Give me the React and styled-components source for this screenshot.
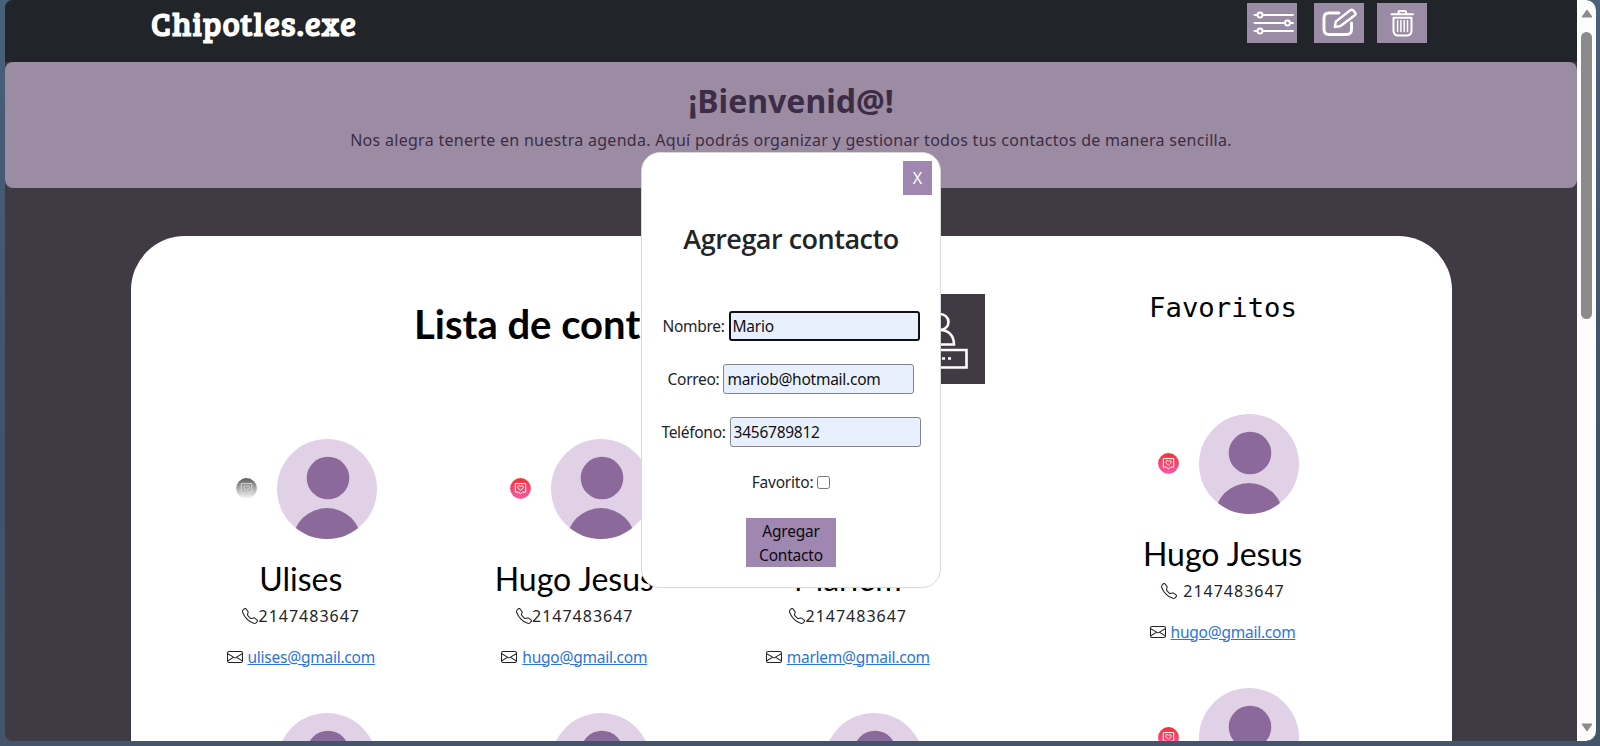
import React from "react";
import styled, { createGlobalStyle } from "styled-components";
import { BsTelephone, BsEnvelope } from "react-icons/bs";

const ui = `"Segoe UI", "Noto Sans", "Open Sans", sans-serif`;
const lucida = `"Lucida Sans", "Noto Sans", sans-serif`;

const Global = createGlobalStyle`
  * { box-sizing: border-box; }
  body { margin: 0; background: #44546a; overflow: hidden; }
  h1, h2, h3, p { margin: 0; font-weight: 400; }
`;

const Desktop = styled.div`
  height: 746px;
  padding: 0 4px 5px 5px;
  background: linear-gradient(180deg, #48607a, #42526a 60%, #44546a);
`;
const Window = styled.div`
  position: relative;
  display: flex;
  height: 741px;
  overflow: hidden;
  border-radius: 8px 10px 10px 8px;
  background: #403a45;
`;
const Page = styled.div`
  width: 1572px;
  height: 741px;
  overflow: hidden;
  font-family: ${ui};
  font-size: 16px;
  line-height: 24px;
  color: #212529;
`;

const Header = styled.header`
  display: flex;
  justify-content: space-between;
  height: 61.5px;
  padding: 0 150.500px 0 146px;
  background: #212529;
`;
const Brand = styled.h1`
  font: 700 33px/46px "Bree Serif", "DejaVu Serif Condensed", "DejaVu Serif", serif;
  font-stretch: condensed;
  letter-spacing: 0.8px;
  color: #fff;
  white-space: nowrap;
`;
const Tools = styled.div`
  display: flex;
  padding-top: 2.5px;
`;
const Tool = styled.button`
  width: 50px;
  height: 40px;
  margin-left: ${(p) => p.$gap}px;
  padding: 0;
  border: 0;
  background: #9b8ca5;
  svg { display: block; }
`;

const Banner = styled.section`
  height: 126.5px;
  padding-top: 16.5px;
  border-radius: 8px;
  background: #9b8ca3;
  color: #3d2c45;
  text-align: center;
  font-family: ${lucida};
`;
const Welcome = styled.h2`
  font-weight: 700;
  font-size: 32px;
  line-height: 46px;
  letter-spacing: 0;
`;
const Intro = styled.p`
  margin-top: 4px;
  font-size: 16px;
  line-height: 24px;
  letter-spacing: 0.29px;
  white-space: nowrap;
`;

const Sheet = styled.main`
  display: flex;
  width: 1321px;
  height: 700px;
  margin: 48px 0 0 126px;
  padding-left: 33px;
  border-radius: 54px 54px 0 0;
  background: #fff;
`;
const Contacts = styled.section`
  width: 821px;
`;
const ContactsHead = styled.div`
  display: flex;
  justify-content: space-between;
  height: 202.5px;
  padding: 58px 0 0 250px;
`;
const ListTitle = styled.h2`
  padding-top: 6px;
  font: 700 40px/48px Lato, sans-serif;
  color: #000;
  white-space: nowrap;
`;
const AddButton = styled.button`
  width: 90px;
  height: 90px;
  padding: 0;
  border: 0;
  background: #403a45;
  svg { display: block; }
`;
const Grid = styled.div`
  display: grid;
  grid-template-columns: repeat(3, 273.5px);
`;
const Favorites = styled.section`
  width: 273px;
  margin-left: 101px;
`;
const FavTitle = styled.h2`
  height: 177.5px;
  padding: 53px 0 0 1px;
  font: 400 27.3px/38px Consolas, "DejaVu Sans Mono", monospace;
  color: #000;
  text-align: center;
`;
const Card = styled.article`
  height: 274.4px;
  text-align: center;
`;
const Portrait = styled.div`
  display: flex;
  align-items: center;
  gap: 20px;
  height: 100px;
  margin-left: 72px;
  svg { display: block; flex: none; }
`;
const Name = styled.h3`
  margin-top: 21px;
  font: 400 32px/38px Lato, sans-serif;
  color: #000;
`;
const Line = styled.p`
  display: flex;
  align-items: center;
  justify-content: center;
  gap: ${(p) => p.$gap}px;
  height: 24px;
  margin-top: ${(p) => p.$top}px;
`;
const Phone = styled.span`
  font-family: ${lucida};
  letter-spacing: 1px;
  margin-right: -1px;
`;
const Mail = styled.a`
  color: #2b74dd;
  text-decoration: underline;
  font-size: 15.5px;
  letter-spacing: -0.24px;
`;

const Scrollbar = styled.div`
  display: flex;
  flex-direction: column;
  align-items: center;
  justify-content: space-between;
  width: 19px;
  padding: 9px 0;
  background: #fcfcfc;
`;
const Thumb = styled.div`
  width: 11px;
  height: 287px;
  margin: 14px 0 auto;
  border-radius: 6px;
  background: #8b8b8b;
`;

const Dialog = styled.form`
  position: absolute;
  left: 636px;
  top: 152px;
  display: flex;
  flex-direction: column;
  align-items: center;
  width: 300px;
  height: 436px;
  padding: 8px 9px 0;
  border: 1px solid #d9d9dc;
  border-radius: 19px;
  background: #fff;
  font-family: ${ui};
  font-size: 15.5px;
  color: #212529;
`;
const Close = styled.button`
  align-self: flex-end;
  width: 29px;
  height: 34px;
  margin-right: -1px;
  padding: 0;
  border: 0;
  background: #9f87b1;
  color: #fff;
  font: 400 16px/34px ${ui};
`;
const DialogTitle = styled.h2`
  margin: 27px 0 55px;
  font-family: "Segoe UI", "Open Sans", "Noto Sans", sans-serif;
  font-weight: 600;
  font-size: 27px;
  line-height: 34px;
  letter-spacing: -0.5px;
  white-space: nowrap;
`;
const Field = styled.label`
  display: flex;
  align-items: center;
  gap: 4px;
  height: 30px;
  margin-bottom: 23px;
  white-space: nowrap;
  letter-spacing: -0.3px;
`;
const Input = styled.input`
  width: 191px;
  height: 30px;
  padding: 1px ${(p) => (p.$focus ? 2 : 3)}px;
  border: ${(p) => (p.$focus ? "2px solid #101018" : "1px solid #84848c")};
  border-radius: 3px;
  outline: 0;
  background: #e8f0fe;
  color: #111;
  font: 400 15.5px ${ui};
  letter-spacing: -0.25px;
`;
const Check = styled.label`
  display: flex;
  align-items: center;
  gap: 4px;
  height: 24px;
  letter-spacing: -0.2px;
  input { width: 13px; height: 13px; margin: 0; }
`;
const Submit = styled.button`
  width: 90px;
  height: 49px;
  margin-top: 24px;
  padding: 0 6px;
  border: 0;
  background: #9f87b1;
  color: #0c0a10;
  font: 400 15.5px/24px ${ui};
  letter-spacing: -0.2px;
`;

const Avatar = () => (
  <svg width="100" height="100" viewBox="0 0 100 100">
    <clipPath id="disc"><circle cx="50" cy="50" r="50" /></clipPath>
    <circle cx="50" cy="50" r="50" fill="#e1d1e6" />
    <g clipPath="url(#disc)" fill="#8b6a9b">
      <circle cx="51" cy="39" r="21.3" />
      <circle cx="50" cy="103.5" r="34.5" />
    </g>
  </svg>
);

const Heart = ({ on }) => (
  <svg width="21" height="21" viewBox="0 0 21 21" fill="none">
    <linearGradient id={on ? "liked" : "plain"} x1="0" y1="0" x2="0" y2="1">
      <stop offset="0" stopColor={on ? "#f03434" : "#5c5c5c"} />
      <stop offset="1" stopColor={on ? "#fa58a4" : "#fdfdfd"} />
    </linearGradient>
    <circle cx="10.5" cy="10.5" r="10.4" fill={`url(#${on ? "liked" : "plain"})`} />
    <g stroke={on ? "#fff" : "#d4d4d4"} strokeWidth="1" strokeLinejoin="round">
      <path d="M5.3 5.6h10.4v8.6h-3.2l-2 1.6-2-1.6H5.3z" />
      <path d="M10.5 12.4 7.9 9.8C7 8.6 8.8 6.6 10.5 8.4c1.7-1.8 3.500.2 2.600 1.400z" />
    </g>
  </svg>
);

const Person = ({ name, mail, on, fav }) => (
  <Card>
    <Portrait><Heart on={on} /><Avatar /></Portrait>
    {name && (
      <>
        <Name>{name}</Name>
        <Line $gap={fav ? 6 : 0} $top={6}><BsTelephone size={16} /><Phone>2147483647</Phone></Line>
        <Line $gap={5} $top={17}><BsEnvelope size={16} /><Mail href="#">{mail}</Mail></Line>
      </>
    )}
  </Card>
);

const people = [
  { name: "Ulises", mail: "ulises@gmail.com" },
  { name: "Hugo Jesus", mail: "hugo@gmail.com", on: true },
  { name: "Marlem", mail: "marlem@gmail.com", on: true },
  { on: true },
  { on: true },
  { on: true },
];

export default function App() {
  return (
    <Desktop>
      <Global />
      <Window>
        <Page>
          <Header>
            <Brand>Chipotles.exe</Brand>
            <Tools>
              <Tool $gap={0} aria-label="Filtrar">
                <svg width="50" height="40" viewBox="0 0 50 40" fill="none" stroke="#fff" strokeWidth="1.9" strokeLinecap="round">
                  <path d="M7.500 12h3M15.500 12H46M7.500 20h30.500M43 20h3M7.500 28h3M15.500 28H46" />
                  <circle cx="13" cy="12" r="2.500" /><circle cx="40.500" cy="20" r="2.500" /><circle cx="13" cy="28" r="2.500" />
                </svg>
              </Tool>
              <Tool $gap={17} aria-label="Editar">
                <svg width="50" height="40" viewBox="0 0 50 40" fill="none" stroke="#fff" strokeWidth="2.9" strokeLinecap="round" strokeLinejoin="round">
                  <path d="M25 10H15q-5 0-5 5V26.500q0 5 5 5h17.500q5 0 5-5v-6.500" />
                  <path strokeWidth="2.400" d="M20.700 24l1.200-5.500L36.600 7q1.500-.8 2.700.5l1.800 2.200q1 1.400-.3 2.500L26.500 23z" />
                </svg>
              </Tool>
              <Tool $gap={12.5} aria-label="Eliminar">
                <svg width="50" height="40" viewBox="0 0 50 40" fill="none" stroke="#fff" strokeWidth="2" strokeLinecap="round" strokeLinejoin="round">
                  <path d="M14.500 11.300h21.500M21.500 11V9.300q0-1.300 1.300-1.300h5q1.300 0 1.300 1.300V11M16.500 14.800h18v12.700q0 5-5 5h-8q-5 0-5-5z" />
                  <path d="M20.600 17.500v11M23.900 17.500v11M27.200 17.500v11M30.500 17.500v11" strokeWidth="1.500" />
                </svg>
              </Tool>
            </Tools>
          </Header>
          <Banner>
            <Welcome>¡Bienvenid@!</Welcome>
            <Intro>Nos alegra tenerte en nuestra agenda. Aquí podrás organizar y gestionar todos tus contactos de manera sencilla.</Intro>
          </Banner>
          <Sheet>
            <Contacts>
              <ContactsHead>
                <ListTitle>Lista de contactos</ListTitle>
                <AddButton aria-label="Agregar">
                  <svg width="90" height="90" viewBox="0 0 90 90" fill="none" stroke="#fff" strokeWidth="2.6">
                    <ellipse cx="45" cy="28" rx="8.500" ry="8" />
                    <path d="M30 50.500c0-9 6-14.500 15-14.500s14 6 14 14.500z" />
                    <path d="M18 56h53.500v17.500H18z" />
                    <path d="M35 64.500h3M41.500 64.500h3M47 64.500h3M53 64.500h3" />
                  </svg>
                </AddButton>
              </ContactsHead>
              <Grid>
                {people.map((p, i) => <Person key={i} {...p} />)}
              </Grid>
            </Contacts>
            <Favorites>
              <FavTitle>Favoritos</FavTitle>
              <Person {...people[1]} fav />
              <Person on fav />
            </Favorites>
          </Sheet>
        </Page>
        <Scrollbar>
          <svg width="12" height="9" viewBox="0 0 12 9"><path d="M6 1 11 8H1z" fill="#8b8b8b" stroke="#8b8b8b" strokeLinejoin="round" /></svg>
          <Thumb />
          <svg width="12" height="9" viewBox="0 0 12 9"><path d="M6 8 1 1h10z" fill="#8b8b8b" stroke="#8b8b8b" strokeLinejoin="round" /></svg>
        </Scrollbar>
        <Dialog>
          <Close type="button">X</Close>
          <DialogTitle>Agregar contacto</DialogTitle>
          <Field>Nombre:<Input $focus defaultValue="Mario" /></Field>
          <Field>Correo:<Input defaultValue="mariob@hotmail.com" /></Field>
          <Field>Teléfono:<Input defaultValue="3456789812" /></Field>
          <Check>Favorito:<input type="checkbox" /></Check>
          <Submit type="button">Agregar Contacto</Submit>
        </Dialog>
      </Window>
    </Desktop>
  );
}
